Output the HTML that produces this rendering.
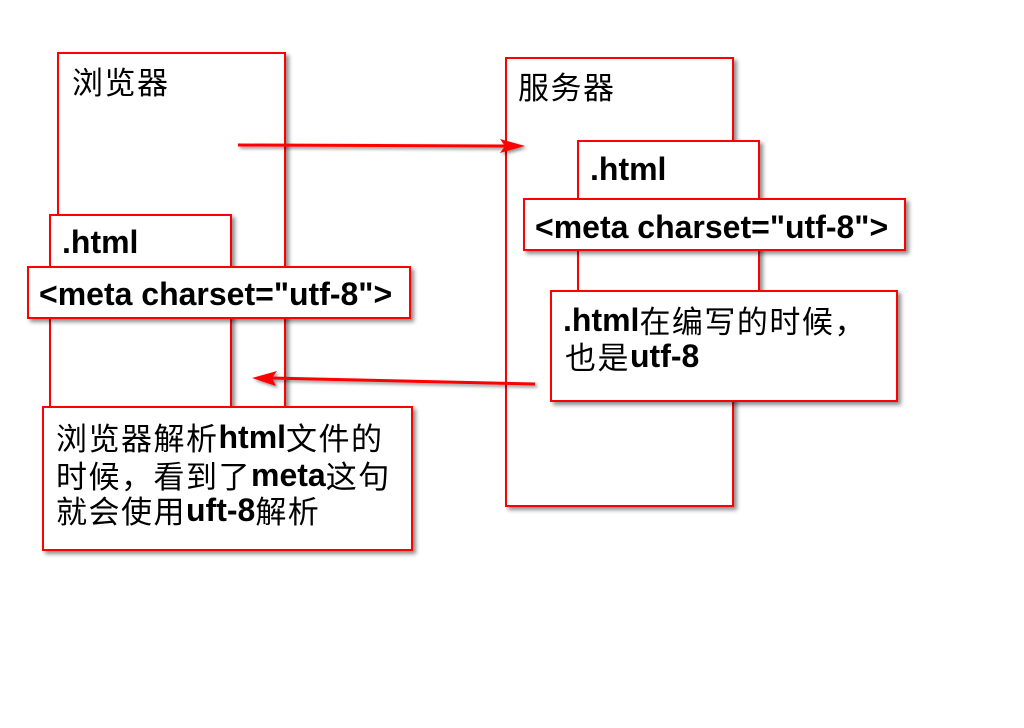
<!DOCTYPE html>
<html><head><meta charset="utf-8"><style>
body{margin:0;width:1024px;height:728px;background:#fff;position:relative;overflow:hidden;font-family:"Liberation Sans","Noto Sans CJK SC",sans-serif;}
.b{position:absolute;box-sizing:border-box;border:2px solid #f00;background:#fff;box-shadow:3px 3px 4px rgba(0,0,0,.45);}
.l{font-weight:bold;font-size:32px;color:#000;font-family:"Liberation Sans",sans-serif;}
.c{font-size:31px;letter-spacing:1.5px;color:#000;font-family:"Noto Sans CJK SC","WenQuanYi Zen Hei",sans-serif;font-weight:normal;}
.ln{position:absolute;white-space:nowrap;height:36px;line-height:36px;}
.ln span{line-height:36px;vertical-align:top;}
</style></head><body>
<div class="b" style="left:57px;top:52px;width:229px;height:360px"></div>
<div class="ln" style="left:72px;top:63px"><span class="c">浏览器</span></div>
<div class="b" style="left:505px;top:57px;width:229px;height:450px"></div>
<div class="ln" style="left:518px;top:68px"><span class="c">服务器</span></div>
<div class="b" style="left:49px;top:214px;width:183px;height:200px"></div>
<div class="ln" style="left:62px;top:224px"><span class="l">.html</span></div>
<div class="b" style="left:27px;top:266px;width:384px;height:53px"></div>
<div class="ln" style="left:39px;top:276px"><span class="l">&lt;meta charset="utf-8"&gt;</span></div>
<div class="b" style="left:577px;top:140px;width:183px;height:160px"></div>
<div class="ln" style="left:590px;top:151px"><span class="l">.html</span></div>
<div class="b" style="left:523px;top:198px;width:383px;height:53px"></div>
<div class="ln" style="left:535px;top:209px"><span class="l">&lt;meta charset="utf-8"&gt;</span></div>
<div class="b" style="left:550px;top:290px;width:348px;height:112px"></div>
<div class="ln" style="left:563px;top:302px"><span class="l">.html</span><span class="c">在编写的时候，</span></div>
<div class="ln" style="left:565px;top:338px"><span class="c">也是</span><span class="l">utf-8</span></div>
<div class="b" style="left:42px;top:406px;width:371px;height:145px"></div>
<div class="ln" style="left:56px;top:419px"><span class="c">浏览器解析</span><span class="l">html</span><span class="c">文件的</span></div>
<div class="ln" style="left:56px;top:457px"><span class="c">时候，看到了</span><span class="l">meta</span><span class="c">这句</span></div>
<div class="ln" style="left:56px;top:492px"><span class="c">就会使用</span><span class="l">uft-8</span><span class="c">解析</span></div>
<svg style="position:absolute;left:0;top:0" width="1024" height="728">
<defs><filter id="s"><feDropShadow dx="2" dy="2" stdDeviation="1.5" flood-opacity=".45"/></filter></defs>
<g filter="url(#s)" fill="#f00" stroke="#f00">
<line x1="238" y1="145" x2="505" y2="146" stroke-width="3"/>
<polygon points="525,146 500,139 505,146 500,153" stroke="none"/>
<line x1="535" y1="384" x2="270" y2="378" stroke-width="3"/>
<polygon points="252,378 277,371 272,378 276,386" stroke="none"/>
</g></svg>
</body></html>
